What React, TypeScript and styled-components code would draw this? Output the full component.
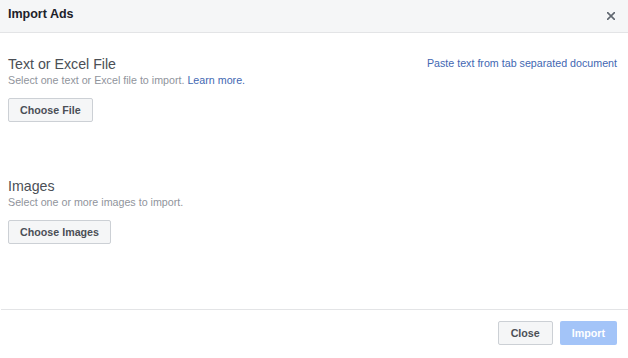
import React from "react";
import styled, { createGlobalStyle } from "styled-components";

const GlobalStyle = createGlobalStyle`
    html, body {
        margin: 0;
        padding: 0;
        background: #ffffff;
    }
    body {
        font-family: "Liberation Sans", Arial, Helvetica, sans-serif;
        -webkit-font-smoothing: antialiased;
    }
`;

interface SectionInfo {
    title: string;
    hint: string;
    learnMore?: boolean;
    button: string;
}

const sections: SectionInfo[] = [
    {
        title: "Text or Excel File",
        hint: "Select one text or Excel file to import.",
        learnMore: true,
        button: "Choose File"
    },
    {
        title: "Images",
        hint: "Select one or more images to import.",
        button: "Choose Images"
    }
];

function CloseIcon(): React.ReactElement {
    return (
        <svg width="8" height="8" viewBox="0 0 8 8" aria-hidden="true">
            <path d="M0.6 0.6 L7.4 7.4 M7.4 0.6 L0.6 7.4" stroke="#606770" strokeWidth="1.6" strokeLinecap="square" />
        </svg>
    );
}

function UploadSection(props: { info: SectionInfo; first: boolean }): React.ReactElement {
    const { info } = props;
    return (
        <Section $first={props.first}>
            <SectionTop>
                <div>
                    <SectionTitle>{info.title}</SectionTitle>
                    <Hint>
                        {info.hint}
                        {info.learnMore && (
                            <>
                                {" "}
                                <Link href="#">Learn more.</Link>
                            </>
                        )}
                    </Hint>
                </div>
                {props.first && <Link href="#">Paste text from tab separated document</Link>}
            </SectionTop>
            <SecondaryButton type="button">{info.button}</SecondaryButton>
        </Section>
    );
}

export default function App(): React.ReactElement {
    return (
        <>
            <GlobalStyle />
            <Dialog>
                <Header>
                    <Title>Import Ads</Title>
                    <CloseButton type="button" aria-label="Close">
                        <CloseIcon />
                    </CloseButton>
                </Header>
                <Body>
                    {sections.map((s, i) => (
                        <UploadSection key={s.title} info={s} first={i === 0} />
                    ))}
                </Body>
                <Footer>
                    <SecondaryButton type="button">Close</SecondaryButton>
                    <PrimaryButton type="button" disabled>
                        Import
                    </PrimaryButton>
                </Footer>
            </Dialog>
        </>
    );
}

const Dialog = styled.div`
    width: 628px;
    height: 358px;
    display: flex;
    flex-direction: column;
    background: #ffffff;
    box-sizing: border-box;
`;

const Header = styled.div`
    height: 32px;
    flex: none;
    display: flex;
    align-items: center;
    justify-content: space-between;
    padding: 0 13px 0 8px;
    background: #f5f6f7;
    border-bottom: 1px solid #e3e4e6;
`;

const Title = styled.h1`
    margin: 0;
    padding-bottom: 4px;
    font-size: 12.5px;
    line-height: 16px;
    font-weight: bold;
    color: #1d2129;
`;

const CloseButton = styled.button`
    display: flex;
    padding: 0;
    border: 0;
    background: transparent;
    cursor: pointer;
`;

const Body = styled.div`
    flex: 1;
    padding: 23px 11px 0 8px;
`;

const Section = styled.div<{ $first: boolean }>`
    margin-top: ${(p) => (p.$first ? "0" : "56px")};
`;

const SectionTop = styled.div`
    display: flex;
    justify-content: space-between;
    align-items: flex-start;
`;

const SectionTitle = styled.div`
    font-size: 14.2px;
    line-height: 17px;
    color: #4b4f56;
`;

const Hint = styled.div`
    font-size: 10.7px;
    line-height: 14px;
    color: #90949c;
`;

const Link = styled.a`
    font-size: 10.7px;
    line-height: 14px;
    color: #4267b2;
    text-decoration: none;
`;

const SecondaryButton = styled.button`
    display: block;
    height: 24px;
    margin-top: 11px;
    padding: 0 11px;
    box-sizing: border-box;
    border: 1px solid #ccd0d5;
    border-radius: 2px;
    background: #f5f6f7;
    color: #4b4f56;
    font-family: inherit;
    font-size: 10.7px;
    font-weight: bold;
    cursor: pointer;
`;

const PrimaryButton = styled.button`
    height: 24px;
    padding: 0 11px;
    box-sizing: border-box;
    border: 1px solid transparent;
    border-radius: 2px;
    background: #a3c4f8;
    color: #ffffff;
    font-family: inherit;
    font-size: 10.7px;
    font-weight: bold;
`;

const Footer = styled.div`
    flex: none;
    display: flex;
    justify-content: flex-end;
    gap: 7px;
    padding: 11px 11px 13px 0;
    border-top: 1px solid #e3e4e6;
    margin: 0 0 0 1px;

    & > ${SecondaryButton} {
        margin-top: 0;
        padding: 0 12px;
    }
`;
